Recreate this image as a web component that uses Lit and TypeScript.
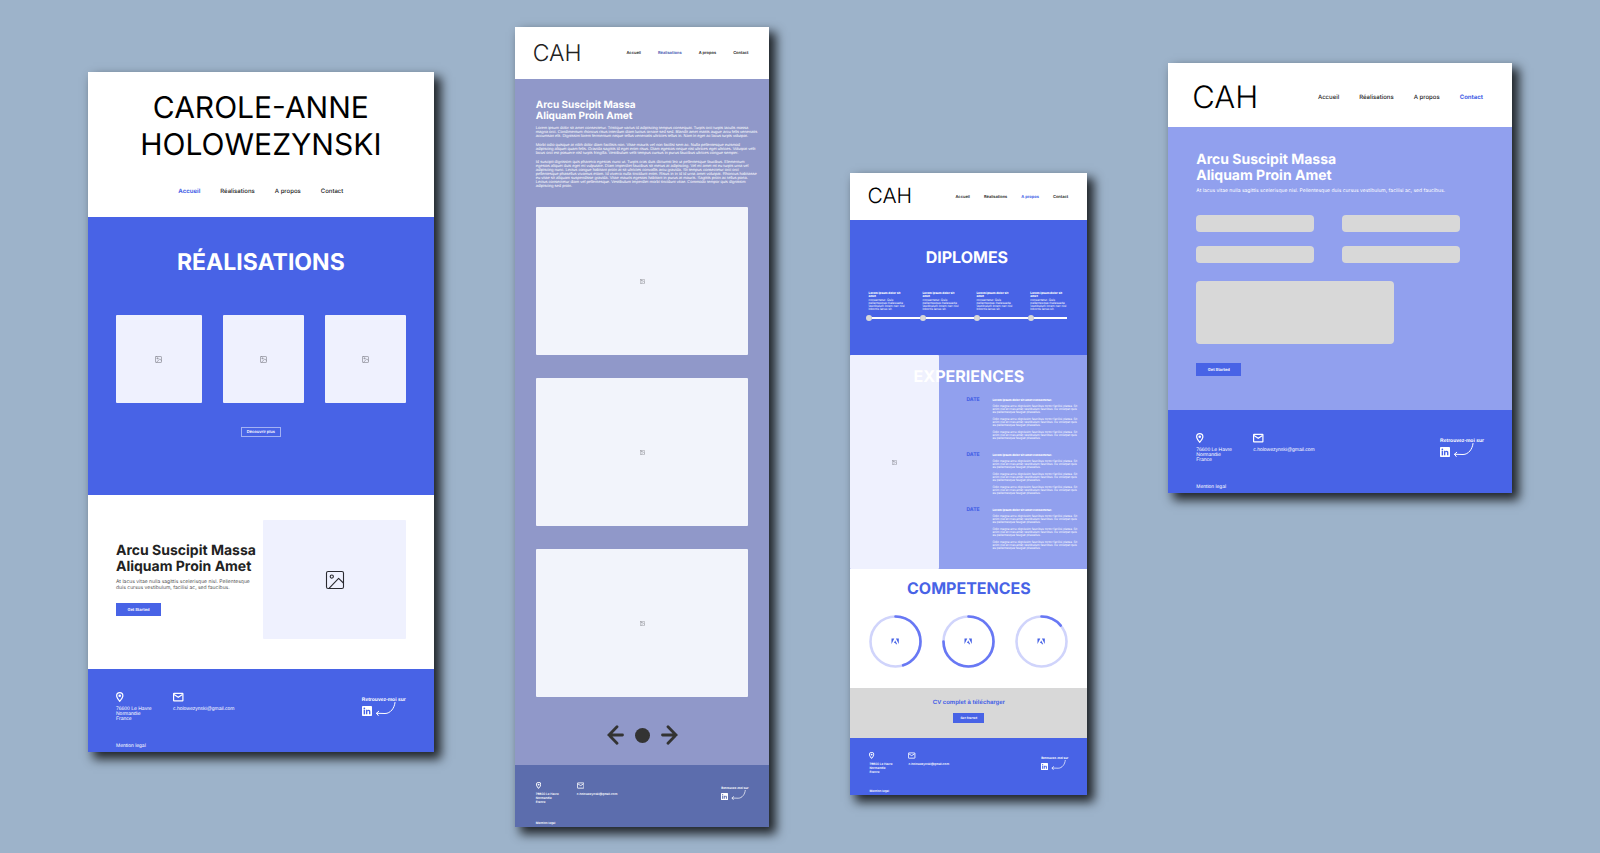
import { LitElement, html, css, svg } from "lit";
import { customElement, property } from "lit/decorators.js";
import { classMap } from "lit/directives/class-map.js";

const base = css`
  *,
  *::before,
  *::after {
    box-sizing: border-box;
  }
  h1,
  h2,
  h3,
  p,
  ul,
  ol {
    margin: 0;
    padding: 0;
  }
  ul,
  ol {
    list-style: none;
  }
  a {
    color: inherit;
    text-decoration: none;
  }
  svg {
    display: block;
  }
`;

/** Site navigation with the current page highlighted. */
@customElement("site-nav")
export class SiteNav extends LitElement {
  @property() current = "";
  @property() size = "lg";

  static styles = [
    base,
    css`
      :host {
        display: block;
      }
      .list {
        display: flex;
        gap: 20px;
        font-size: 6px;
        line-height: 10px;
        font-weight: 500;
        color: #222;
        white-space: nowrap;
      }
      .md {
        gap: 17px;
        font-size: 4px;
        line-height: 6px;
        font-weight: 600;
      }
      .sm {
        gap: 14px;
        font-size: 4px;
        line-height: 6px;
        font-weight: 600;
      }
      .current {
        color: var(--accent, #4863e6);
        font-weight: 700;
      }
    `,
  ];

  render() {
    const pages = ["Accueil", "Réalisations", "A propos", "Contact"];
    return html`<nav>
      <ul class=${classMap({ list: true, [this.size]: true })}>
        ${pages.map(
          (p) => html`<li><a href="#" class=${classMap({ current: p === this.current })}>${p}</a></li>`,
        )}
      </ul>
    </nav>`;
  }
}

/** Empty picture frame with an image glyph in its middle. */
@customElement("image-slot")
export class ImageSlot extends LitElement {
  @property() icon = "sm";

  static styles = [
    base,
    css`
      :host {
        display: grid;
        place-items: center;
        background: var(--slot, #eff1fe);
        border-radius: 1px;
      }
      .glyph {
        width: 7px;
        height: 7px;
        opacity: 0.5;
      }
      .xs {
        width: 5px;
        height: 5px;
        opacity: 0.5;
      }
      .lg {
        width: 20px;
        height: 20px;
        opacity: 1;
      }
    `,
  ];

  render() {
    return html`<svg
      class=${classMap({ glyph: true, [this.icon]: true })}
      viewBox="0 0 20 20"
      fill="none"
      stroke="#2a2a30"
      stroke-width=${this.icon === "lg" ? 1.1 : 2}
      stroke-linejoin="round"
      stroke-linecap="round"
    >
      <rect x="1.5" y="1.5" width="17" height="17" rx="1.6" />
      <circle cx="6.8" cy="6.6" r="1.6" />
      <path d="M4 18.4 L13.6 8.4 L18.4 13" />
    </svg>`;
  }
}

/** Footer with address, e-mail and LinkedIn link. */
@customElement("site-footer")
export class SiteFooter extends LitElement {
  @property() size = "lg";

  static styles = [
    base,
    css`
      :host {
        display: block;
      }
      .footer {
        padding: 23px 28px 3px;
        background: var(--footer, #4863e6);
        color: #fff;
        font-family: "Liberation Sans", sans-serif;
        font-size: 5px;
        line-height: 5px;
        white-space: nowrap;
      }
      .top {
        display: flex;
        align-items: flex-start;
      }
      .place {
        width: 57px;
      }
      .place,
      .mail {
        display: grid;
        gap: 5px;
        font-style: normal;
      }
      .icon {
        height: 10px;
      }
      .social {
        margin-left: auto;
        padding-top: 6px;
        display: grid;
        gap: 3px;
        font-weight: 700;
      }
      .links {
        display: flex;
        gap: 3px;
        align-items: flex-end;
      }
      .arrow {
        height: 14px;
        margin-top: -4px;
      }
      .legal {
        margin-top: 22px;
      }
      .md,
      .sm {
        font-family: Inter, "Liberation Sans", sans-serif;
        font-size: 3px;
        line-height: 4px;
        font-weight: 600;
      }
      .md {
        padding: 17px 21px 2px;
      }
      .md .place {
        width: 41px;
      }
      .md .place,
      .md .mail,
      .sm .place,
      .sm .mail {
        gap: 3px;
      }
      .md .icon,
      .sm .icon {
        height: 7px;
      }
      .md .social,
      .sm .social {
        padding-top: 4px;
        gap: 3px;
      }
      .md .arrow,
      .sm .arrow {
        height: 10px;
        margin-top: -3px;
      }
      .md .legal {
        margin-top: 17px;
      }
      .sm {
        padding: 14px 19px 2px;
      }
      .sm .place {
        width: 39px;
      }
      .sm .legal {
        margin-top: 15px;
      }
    `,
  ];

  render() {
    return html`<footer class=${classMap({ footer: true, [this.size]: true })}>
      <div class="top">
        <address class="place">
          <svg class="icon" viewBox="0 0 15 20" fill="#fff">
            <path
              fill-rule="evenodd"
              d="M7.5 0A7.4 7.4 0 0 0 .1 7.4C.1 12.6 7.5 20 7.5 20s7.4-7.4 7.4-12.6A7.4 7.4 0 0 0 7.5 0Zm0 2.4a5 5 0 0 1 5 5c0 2.700-2.800 6.800-5 9.100-2.200-2.300-5-6.400-5-9.100A5 5 0 0 1 7.500 2.400Z"
            />
            <circle cx="7.500" cy="7.400" r="2.600" />
          </svg>
          <span>76600 Le Havre<br />Normandie<br />France</span>
        </address>
        <div class="mail">
          <svg class="icon" viewBox="0 0 21 20" fill="none" stroke="#fff" stroke-width="2.400">
            <rect x="1.200" y="2.600" width="18.600" height="15" rx="0.800" />
            <path d="M2 5 L10.500 10.400 L19 5" />
          </svg>
          <a href="mailto:c.holowezynski@gmail.com">c.holowezynski@gmail.com</a>
        </div>
        <div class="social">
          <span>Retrouvez-moi sur</span>
          <div class="links">
            <a href="#" aria-label="LinkedIn">
              <svg class="icon" viewBox="0 0 20 20">
                <rect width="20" height="20" rx="1.600" fill="#fff" />
                <g fill="var(--footer, #4863e6)">
                  <circle cx="4.700" cy="4.900" r="1.700" />
                  <rect x="3.300" y="7.700" width="2.800" height="9" />
                  <path
                    d="M7.900 7.700h2.700v1.300c.5-.9 1.500-1.500 2.800-1.500 2.600 0 3.400 1.600 3.400 4.100v5.100H14v-4.600c0-1.300-.3-2.200-1.500-2.200s-1.800.9-1.800 2.200v4.600H7.900Z"
                  />
                </g>
              </svg>
            </a>
            <svg class="arrow" viewBox="0 0 42 28" fill="none" stroke="#fff" stroke-width="2" stroke-linecap="round">
              <path d="M40 1 C39 12 31 23 20 23 L3 22.500 M7.500 18.500 L3 22.500 L6.500 27" />
            </svg>
          </div>
        </div>
      </div>
      <p class="legal"><a href="#">Mention legal</a></p>
    </footer>`;
  }
}

const TIMELINE = [0, 1, 2, 3];
const ENTRIES = [0, 1, 2];
const SKILLS = [
  { name: "Adobe 1", value: 45 },
  { name: "Adobe 2", value: 75 },
  { name: "Adobe 3", value: 14 },
];

@customElement("app-root")
export class AppRoot extends LitElement {
  static styles = [
    base,
    css`
      :host {
        display: block;
        min-height: 100vh;
        background: #9db3ca;
        font-family: Inter, "Liberation Sans", sans-serif;
        text-rendering: geometricPrecision;
      }
      .canvas {
        display: grid;
        grid-template-columns: 346fr 255fr 237fr 344fr;
        gap: 81px;
        align-items: start;
        padding: 27px 88px 26px 88px;
      }
      .board {
        min-width: 0;
        background: #fff;
        box-shadow: 6px 6px 10px 1px rgba(0, 0, 0, 0.8);
      }
      .home {
        margin-top: 45px;
      }
      .works {
        --accent: #4f5fb5;
        --slot: #f2f4fb;
        --footer: #5c6dad;
      }
      .about {
        margin-top: 146px;
      }
      .contact {
        margin-top: 36px;
      }

      .button {
        display: block;
        width: 45px;
        height: 13px;
        padding: 0;
        border: 0;
        background: #4863e6;
        color: #fff;
        font: 600 4px/6px Inter, "Liberation Sans", sans-serif;
        text-align: center;
        text-rendering: inherit;
      }
      .button.outline {
        width: 40px;
        height: 10px;
        border: 1px solid #a3b1f3;
      }
      .button.small {
        width: 31px;
        height: 10px;
        font-size: 3px;
      }

      .hero {
        display: grid;
        justify-items: center;
        gap: 23px;
        padding: 18px 0 20px;
      }
      .name {
        font-size: 30px;
        line-height: 37px;
        font-weight: 400;
        color: #000;
        text-align: center;
      }
      .bar {
        display: flex;
        align-items: center;
        justify-content: space-between;
      }
      .logo {
        font-weight: 300;
        color: #000;
      }
      .works .bar {
        padding: 11px 21px 11px 18px;
      }
      .works .logo {
        font-size: 23px;
        line-height: 30px;
        color: #222;
      }
      .about .bar {
        padding: 10px 19px 9px 17px;
      }
      .about .logo {
        font-size: 21px;
        line-height: 28px;
      }
      .contact .bar {
        padding: 16px 29px 10px 24px;
      }
      .contact .logo {
        font-size: 31px;
        line-height: 38px;
      }

      .gallery {
        display: grid;
        justify-items: center;
        padding: 31px 28px 58px;
        background: #4863e6;
      }
      .big {
        font-size: 23px;
        line-height: 28px;
        font-weight: 700;
        color: #fff;
      }
      .cards {
        display: grid;
        grid-template-columns: 86fr 81fr 81fr;
        gap: 21px;
        width: 100%;
        margin: 39px 0 24px;
      }
      .cards image-slot {
        height: 88px;
      }
      .intro {
        display: grid;
        grid-template-columns: 147fr 142fr;
        align-items: center;
        padding: 25px 28px 30px;
      }
      .intro image-slot {
        height: 119px;
      }
      .title {
        font-size: 14px;
        line-height: 16px;
        font-weight: 700;
        color: #222;
        white-space: nowrap;
      }
      .lead {
        margin: 4px 0 12px;
        font-size: 5px;
        line-height: 6px;
        color: #555;
        white-space: nowrap;
      }

      .portfolio {
        padding: 21px 21px 20px;
        background: #9098c9;
        color: #fff;
      }
      .portfolio .title {
        font-size: 10px;
        line-height: 11px;
        color: #fff;
      }
      .prose {
        display: grid;
        gap: 5px;
        margin: 4px 0 19px;
        font-family: "Liberation Sans", sans-serif;
        font-size: 4px;
        line-height: 4px;
        white-space: nowrap;
      }
      .shots {
        display: grid;
        gap: 23px;
      }
      .shots image-slot {
        height: 148px;
      }
      .pager {
        display: flex;
        justify-content: center;
        align-items: center;
        gap: 11px;
        margin-top: 28px;
      }
      .step {
        padding: 0;
        border: 0;
        background: none;
      }
      .arrow {
        width: 17px;
        height: 20px;
      }
      .dot {
        width: 15px;
        height: 15px;
        border-radius: 50%;
        background: #333;
      }

      .heading {
        font-size: 16px;
        line-height: 20px;
        font-weight: 700;
        color: #fff;
        text-align: center;
      }
      .degrees {
        padding: 27px 20px 34px 16px;
        background: #4863e6;
      }
      .timeline {
        display: grid;
        grid-template-columns: 54fr 54fr 54fr 39fr;
        margin-top: 25px;
        color: #fff;
        font-size: 3px;
        line-height: 3px;
        white-space: nowrap;
      }
      .stop {
        display: grid;
        gap: 1px;
      }
      .stop h3,
      .stop p {
        padding-left: 2px;
      }
      .stop h3 {
        font-size: 3px;
        line-height: 3px;
        font-weight: 800;
      }
      .rail {
        display: flex;
        align-items: center;
        margin-top: 3px;
      }
      .rail::before {
        content: "";
        width: 6px;
        height: 6px;
        border-radius: 50%;
        background: #d8d8d8;
      }
      .rail::after {
        content: "";
        flex: 1;
        height: 2px;
        background: #fff;
      }
      .jobs {
        position: relative;
        display: grid;
        grid-template-columns: 89fr 148fr;
        background: #91a0ee;
      }
      .jobs .heading {
        position: absolute;
        top: 11px;
        left: 0;
        right: 0;
      }
      .entries {
        display: grid;
        gap: 13px;
        padding: 43px 10px 19px 27px;
      }
      .entry {
        display: grid;
        grid-template-columns: 26px 1fr;
        color: #fff;
        font-size: 3px;
        line-height: 3px;
        white-space: nowrap;
      }
      .date {
        font-size: 5px;
        line-height: 4px;
        font-weight: 800;
        color: #4863e6;
      }
      .entry h3 {
        margin-bottom: 3px;
        font-size: 3px;
        line-height: 4px;
        font-weight: 800;
      }
      .copy {
        display: grid;
        gap: 4px;
      }
      .skills {
        padding: 9px 19px 20px;
      }
      .skills .heading {
        color: #4863e6;
      }
      .rings {
        display: flex;
        justify-content: space-between;
        margin-top: 17px;
      }
      .ring {
        width: 53px;
        height: 53px;
      }
      .cv {
        display: grid;
        justify-items: center;
        gap: 6px;
        padding: 11px 0 15px;
        background: #d8d8d8;
      }
      .cv h2 {
        font-family: "Liberation Sans", sans-serif;
        font-size: 6px;
        line-height: 8px;
        font-weight: 700;
        color: #4863e6;
      }

      .reach {
        padding: 25px 28px 34px;
        background: #91a0ee;
      }
      .reach .title,
      .reach .lead {
        color: #fff;
      }
      .form {
        display: grid;
        grid-template-columns: 1fr 1fr;
        column-gap: 28px;
        row-gap: 14px;
        margin: 21px 24px 0 0;
      }
      .field {
        display: block;
        width: 100%;
        height: 17px;
        padding: 2px 4px;
        border: 0;
        border-radius: 4px;
        background: #d8d8d8;
        font: 6px/8px Inter, sans-serif;
        resize: none;
      }
      .message {
        grid-column: 1 / -1;
        width: 75%;
        height: 63px;
        margin: 4px 0 5px;
      }
    `,
  ];

  private home() {
    return html`<article class="board home">
      <header class="hero">
        <h1 class="name">CAROLE-ANNE<br />HOLOWEZYNSKI</h1>
        <site-nav current="Accueil"></site-nav>
      </header>
      <section class="gallery">
        <h2 class="big">RÉALISATIONS</h2>
        <div class="cards">
          <image-slot></image-slot>
          <image-slot></image-slot>
          <image-slot></image-slot>
        </div>
        <button class="button outline">Découvrir plus</button>
      </section>
      <section class="intro">
        <div>
          <h2 class="title">Arcu Suscipit Massa<br />Aliquam Proin Amet</h2>
          <p class="lead">
            At lacus vitae nulla sagittis scelerisque nisl. Pellentesque<br />duis cursus vestibulum, facilisi ac, sed
            faucibus.
          </p>
          <button class="button">Get Started</button>
        </div>
        <image-slot icon="lg"></image-slot>
      </section>
      <site-footer></site-footer>
    </article>`;
  }

  private works() {
    return html`<article class="board works">
      <header class="bar">
        <span class="logo">CAH</span>
        <site-nav size="md" current="Réalisations"></site-nav>
      </header>
      <section class="portfolio">
        <h2 class="title">Arcu Suscipit Massa<br />Aliquam Proin Amet</h2>
        <div class="prose">
          <p>
            Lorem ipsum dolor sit amet consectetur. Tristique varius id adipiscing tempus consequat. Turpis orci turpis
            iaculis massa<br />magna orci. Condimentum rhoncus risus interdum diam luctus ornare sed sed. Blandit amet
            mattis augue arcu felis venenatis<br />accumsan elit. Dignissim lorem fermentum neque tellus venenatis
            ultricies tellus in. Nam in eget ac lacus turpis volutpat.
          </p>
          <p>
            Morbi odio quisque at nibh dolor diam facilisis non. Vitae mauris vel non facilisi sem ac. Nulla pellentesque
            euismod<br />adipiscing aliquet quam felis. Gravida sagittis id eget enim risus. Diam egestas neque nisi
            ultrices eget ultrices. Volutpat velit<br />lacus orci est posuere nisl turpis fringilla. Vestibulum velit
            tempus cursus in purus faucibus ultrices congue semper.
          </p>
          <p>
            Id suscipit dignissim quis pharetra egestas nunc ut. Turpis cras duis dictumst leo ut pellentesque faucibus.
            Elementum<br />egestas aliquet duis eget mi vulputate. Diam imperdiet faucibus sit metus at adipiscing. Vel
            mi amet mi eu turpis urna vel<br />adipiscing nunc. Lectus congue habitant proin at sit ultricies convallis
            arcu gravida. Sit tempus consectetur orci orci<br />pellentesque phasellus vivamus etiam. Id viverra nulla
            tincidunt enim. Risus in in id id urna amet volutpat. Rhoncus habitasse<br />eu vitae sit aliquam
            suspendisse gravida. Vitae mauris egestas habitant in purus at mauris. Sagittis proin ac tellus porta.<br />Lectus
            consectetur diam vel pellentesque. Vestibulum imperdiet morbi tincidunt vitae. Commodo tempor quis
            dignissim<br />adipiscing sed proin.
          </p>
        </div>
        <div class="shots">
          <image-slot icon="xs"></image-slot>
          <image-slot icon="xs"></image-slot>
          <image-slot icon="xs"></image-slot>
        </div>
        <div class="pager">
          <button class="step" aria-label="Précédent">
            <svg class="arrow" viewBox="0 0 17 20" fill="none" stroke="#333" stroke-width="2.8" stroke-linecap="round">
              <path d="M15.500 10 H2 M10 1.800 L2 10 L10 18.200" />
            </svg>
          </button>
          <span class="dot"></span>
          <button class="step" aria-label="Suivant">
            <svg class="arrow" viewBox="0 0 17 20" fill="none" stroke="#333" stroke-width="2.8" stroke-linecap="round">
              <path d="M1.500 10 H15 M7 1.800 L15 10 L7 18.200" />
            </svg>
          </button>
        </div>
      </section>
      <site-footer size="md"></site-footer>
    </article>`;
  }

  private ring(skill: { name: string; value: number }) {
    return svg`<svg class="ring" viewBox="0 0 53 53" fill="none" role="img" aria-label=${skill.name}>
      <circle cx="26.500" cy="26.500" r="25" stroke="#d0d4fb" stroke-width="2.600" />
      <circle cx="26.500" cy="26.500" r="25" stroke="#6878f4" stroke-width="2.600" stroke-linecap="round"
        pathLength="100" stroke-dasharray="${skill.value} 100" transform="rotate(-90 26.500 26.500)" />
      <path fill="#4863e6" d="M22.500 23.500h2.800l-2.800 5.500ZM29.800 23.500h-2.900l2.900 5.500ZM26.200 25.600l2 3.600h-1.300l-.6-1.200h-1.300Z" />
    </svg>`;
  }

  private about() {
    const copy = html`<p>
      Odio magna arcu dignissim faucibus tortor facilisi platea. Sit<br />enim nisl et cras amet vestibulum faucibus. Eu
      volutpat quis<br />eu pellentesque feugiat phasellus.
    </p>`;
    return html`<article class="board about">
      <header class="bar">
        <span class="logo">CAH</span>
        <site-nav size="sm" current="A propos"></site-nav>
      </header>
      <section class="degrees">
        <h2 class="heading">DIPLOMES</h2>
        <ol class="timeline">
          ${TIMELINE.map(
            () => html`<li class="stop">
              <h3>Lorem ipsum dolor sit<br />amet</h3>
              <p>consectetur. Quis<br />pellentesque malesuada<br />vestibulum lorem nec nisl<br />lobortis lacus sit.</p>
              <div class="rail"></div>
            </li>`,
          )}
        </ol>
      </section>
      <section class="jobs">
        <image-slot icon="xs"></image-slot>
        <div class="entries">
          ${ENTRIES.map(
            () => html`<div class="entry">
              <span class="date">DATE</span>
              <div>
                <h3>Lorem ipsum dolor sit amet consectetur.</h3>
                <div class="copy">${copy}${copy}${copy}</div>
              </div>
            </div>`,
          )}
        </div>
        <h2 class="heading">EXPERIENCES</h2>
      </section>
      <section class="skills">
        <h2 class="heading">COMPETENCES</h2>
        <div class="rings">${SKILLS.map((s) => this.ring(s))}</div>
      </section>
      <section class="cv">
        <h2>CV complet à télécharger</h2>
        <button class="button small">Get Started</button>
      </section>
      <site-footer size="sm"></site-footer>
    </article>`;
  }

  private contact() {
    return html`<article class="board contact">
      <header class="bar">
        <span class="logo">CAH</span>
        <site-nav current="Contact"></site-nav>
      </header>
      <section class="reach">
        <h2 class="title">Arcu Suscipit Massa<br />Aliquam Proin Amet</h2>
        <p class="lead">
          At lacus vitae nulla sagittis scelerisque nisl. Pellentesque duis cursus vestibulum, facilisi ac, sed faucibus.
        </p>
        <form class="form">
          <input class="field" type="text" aria-label="Nom" />
          <input class="field" type="text" aria-label="Prénom" />
          <input class="field" type="email" aria-label="E-mail" />
          <input class="field" type="text" aria-label="Sujet" />
          <textarea class="field message" aria-label="Message"></textarea>
          <button class="button" type="button">Get Started</button>
        </form>
      </section>
      <site-footer></site-footer>
    </article>`;
  }

  render() {
    return html`<main class="canvas">${this.home()}${this.works()}${this.about()}${this.contact()}</main>`;
  }
}
